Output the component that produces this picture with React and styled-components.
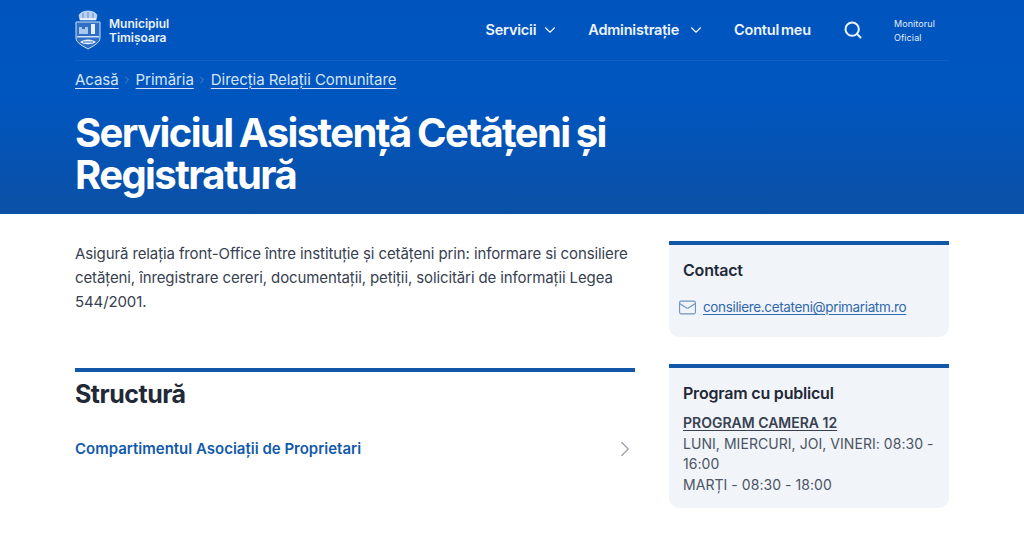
import styled, { createGlobalStyle } from "styled-components";
import { ChevronDown, ChevronRight, Mail, Search } from "lucide-react";

const GlobalStyle = createGlobalStyle`
  html, body {
    margin: 0;
    padding: 0;
    background: #fff;
    font-family: "Inter", "Liberation Sans", sans-serif;
    color: #1f2937;
  }
  * { box-sizing: border-box; }
`;

const Hero = styled.header`
  height: 214px;
  background: linear-gradient(180deg, #0054bd 0%, #0056bf 45%, #0b50a6 100%);
  color: #fff;
`;

const Container = styled.div`
  width: 874px;
  margin: 0 auto;
`;

const Nav = styled.nav`
  height: 61px;
  display: flex;
  align-items: center;
  justify-content: space-between;
  border-bottom: 1px solid rgba(255, 255, 255, 0.07);
  padding-bottom: 1px;
`;

const Brand = styled.a`
  display: flex;
  align-items: center;
  gap: 8px;
  color: #eaf2ff;
`;

const BrandName = styled.span`
  padding-top: 3px;
  font-size: 12px;
  font-weight: 600;
  line-height: 14px;
`;

const NavList = styled.div`
  display: flex;
  align-items: center;
  margin-right: 14px;
`;

const NavItem = styled.a`
  display: flex;
  align-items: center;
  gap: ${(props) => props.$gap}px;
  margin-right: 29px;
  font-size: 14.5px;
  font-weight: 600;
  letter-spacing: -0.2px;
  word-spacing: -1.5px;
  color: #eef4ff;
`;

const SearchButton = styled.span`
  display: flex;
  margin: 0 31px 0 3px;
  color: #eef4ff;
`;

const Monitor = styled.a`
  padding-top: 2px;
  font-size: 9px;
  line-height: 14px;
  font-weight: 400;
  letter-spacing: 0.1px;
  color: #e3edfb;
`;

const Breadcrumbs = styled.div`
  display: flex;
  align-items: center;
  gap: 2.5px;
  height: 37px;
  font-size: 15px;
  letter-spacing: -0.05px;
  color: #d5e4f8;
`;

const Crumb = styled.a`
  text-decoration: underline;
  text-underline-offset: 3px;
  text-decoration-thickness: 1px;
`;

const CrumbSeparator = styled(ChevronRight)`
  color: rgba(255, 255, 255, 0.3);
`;

const Title = styled.h1`
  width: 600px;
  margin: 14px 0 0;
  font-size: 40px;
  line-height: 42px;
  font-weight: 700;
  letter-spacing: -1.6px;
  word-spacing: -1.5px;
  color: #fff;
`;

const Content = styled(Container)`
  display: grid;
  grid-template-columns: 560px 280px;
  column-gap: 34px;
  padding-top: 27px;
`;

const Intro = styled.p`
  margin: 1px 0 0;
  font-size: 15px;
  line-height: 24px;
  letter-spacing: -0.11px;
  color: #374151;
`;

const Section = styled.section`
  margin-top: 54px;
  border-top: 4px solid #1358a8;
`;

const SectionTitle = styled.h2`
  margin: 6px 0 0;
  font-size: 25px;
  line-height: 32px;
  font-weight: 700;
  letter-spacing: -0.5px;
  color: #1f2937;
`;

const StructureRow = styled.a`
  display: flex;
  align-items: center;
  justify-content: space-between;
  margin: 26px -3px 0 0;
  font-size: 15px;
  line-height: 24px;
  font-weight: 600;
  color: #125baa;
`;

const RowArrow = styled(ChevronRight)`
  color: #9ca3af;
`;

const Sidebar = styled.aside`
  display: flex;
  flex-direction: column;
  gap: 27px;
`;

const Card = styled.div`
  height: ${(props) => props.$height}px;
  padding: 13px 14px;
  background: #f1f4f9;
  border-top: 4px solid #1358a8;
  border-radius: 0 0 10px 10px;
`;

const CardTitle = styled.h3`
  margin: 0;
  font-size: 16px;
  line-height: 24px;
  font-weight: 600;
  letter-spacing: -0.2px;
  color: #1f2937;
`;

const ContactRow = styled.div`
  display: flex;
  align-items: center;
  gap: 6px;
  margin: 15px 0 0 -5px;
`;

const MailIcon = styled(Mail)`
  color: #6d94c4;
`;

const EmailLink = styled.a`
  font-size: 13.5px;
  line-height: 20px;
  color: #2f68ac;
  letter-spacing: -0.35px;
  text-decoration: underline;
  text-underline-offset: 2px;
  text-decoration-thickness: 1px;
`;

const Schedule = styled.div`
  margin-top: 8px;
  font-size: 14px;
  line-height: 20.5px;
  letter-spacing: 0.05px;
  color: #4b5563;
`;

const ScheduleHeading = styled.div`
  font-weight: 600;
  letter-spacing: 0;
  color: #374151;
  text-decoration: underline;
  text-underline-offset: 2px;
`;

const Crest = () => (
  <svg width="26" height="40" viewBox="0 0 26 40" fill="none">
    <path
      d="M5 10 L4 5 C6 2 9 1 13 1 C17 1 20 2 22 5 L21 10 Z"
      fill="#b9d0f0"
      stroke="#e6effb"
      strokeWidth="0.6"
    />
    <path d="M8 3 V9 M13 2 V9 M18 3 V9" stroke="#5b8fd0" strokeWidth="1" />
    <rect x="5" y="8" width="16" height="2" fill="#e6effb" />
    <path
      d="M1 12 H25 V28 C25 33 18 36 13 39 C8 36 1 33 1 28 Z"
      fill="#2f70c4"
      stroke="#cfe0f6"
      strokeWidth="1"
    />
    <rect x="16" y="14" width="4" height="10" fill="#e6effb" />
    <path d="M4 24 V17 H7 V19 H10 V17 H13 V24 Z" fill="#a9c6ec" />
    <path d="M2 26 H24 V27.5 H2 Z" fill="#cfe0f6" />
    <path d="M5 32 C9 28.5 17 28.5 21 32 C17 35 9 35 5 32 Z" fill="#e6effb" />
    <path d="M8 32 H18" stroke="#2f6dbd" strokeWidth="1" />
  </svg>
);

export default function App() {
  return (
    <>
      <GlobalStyle />
      <Hero>
        <Container>
          <Nav>
            <Brand>
              <Crest />
              <BrandName>
                Municipiul
                <br />
                Timișoara
              </BrandName>
            </Brand>
            <NavList>
              <NavItem $gap={5}>
                Servicii <ChevronDown size={18} strokeWidth={1.5} />
              </NavItem>
              <NavItem $gap={8}>
                Administrație <ChevronDown size={18} strokeWidth={1.5} />
              </NavItem>
              <NavItem $gap={0}>Contul meu</NavItem>
              <SearchButton>
                <Search size={20} strokeWidth={2.4} />
              </SearchButton>
              <Monitor>
                Monitorul
                <br />
                Oficial
              </Monitor>
            </NavList>
          </Nav>
          <Breadcrumbs>
            <Crumb>Acasă</Crumb>
            <CrumbSeparator size={12} />
            <Crumb>Primăria</Crumb>
            <CrumbSeparator size={12} />
            <Crumb>Direcția Relații Comunitare</Crumb>
          </Breadcrumbs>
          <Title>Serviciul Asistență Cetățeni și Registratură</Title>
        </Container>
      </Hero>
      <Content>
        <main>
          <Intro>
            Asigură relația front-Office între instituție și cetățeni prin:
            informare si consiliere cetățeni, înregistrare cereri, documentații,
            petiții, solicitări de informații Legea 544/2001.
          </Intro>
          <Section>
            <SectionTitle>Structură</SectionTitle>
            <StructureRow>
              Compartimentul Asociații de Proprietari
              <RowArrow size={26} strokeWidth={1.2} />
            </StructureRow>
          </Section>
        </main>
        <Sidebar>
          <Card $height={96}>
            <CardTitle>Contact</CardTitle>
            <ContactRow>
              <MailIcon size={19} strokeWidth={1.4} />
              <EmailLink>consiliere.cetateni@primariatm.ro</EmailLink>
            </ContactRow>
          </Card>
          <Card $height={144}>
            <CardTitle>Program cu publicul</CardTitle>
            <Schedule>
              <ScheduleHeading>PROGRAM CAMERA 12</ScheduleHeading>
              LUNI, MIERCURI, JOI, VINERI: 08:30 - 16:00
              <br />
              MARȚI - 08:30 - 18:00
            </Schedule>
          </Card>
        </Sidebar>
      </Content>
    </>
  );
}
